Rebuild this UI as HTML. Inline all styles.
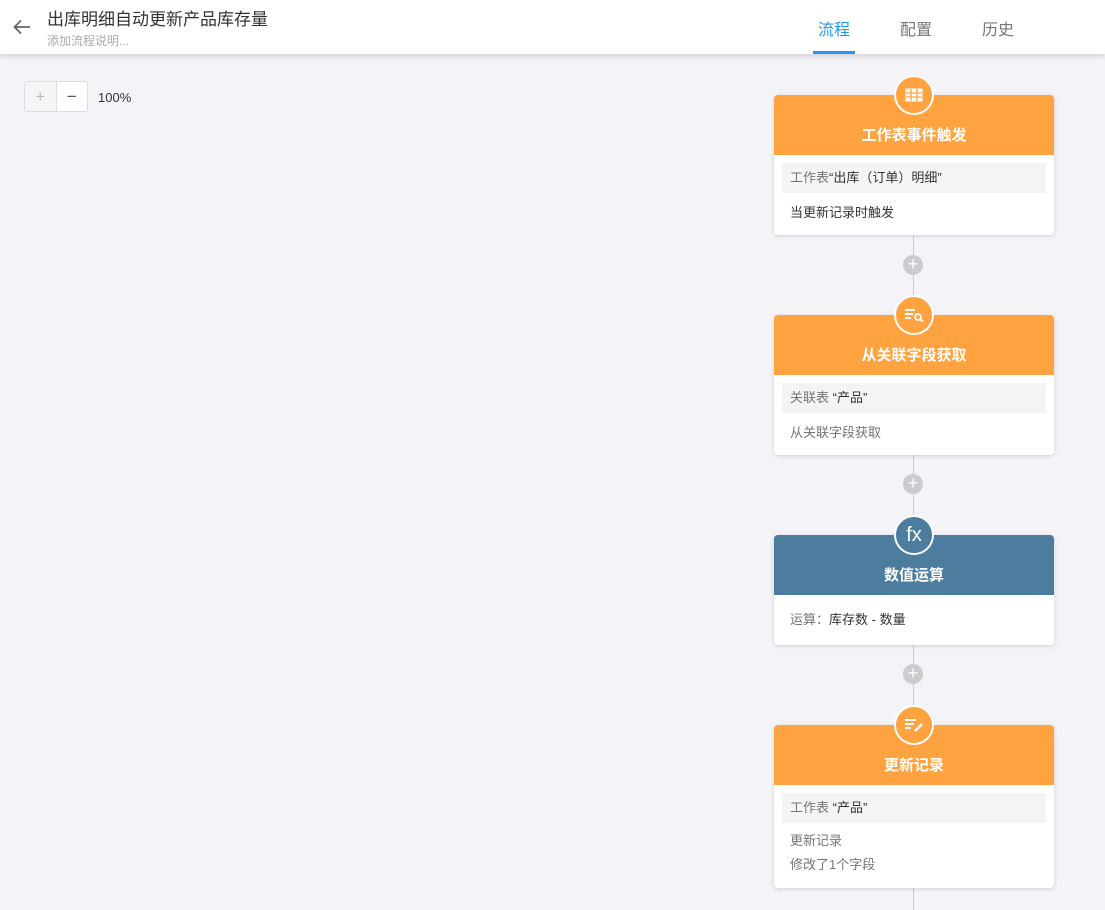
<!DOCTYPE html>
<html><head><meta charset="utf-8"><style>
*{margin:0;padding:0;box-sizing:border-box}
body{width:1105px;height:904px;background:#f3f3f8;font-family:"Liberation Sans","Noto Sans CJK SC",sans-serif;position:relative;overflow:hidden}
.hdr{position:absolute;left:0;top:0;width:1105px;height:54px;background:#fff;box-shadow:0 2px 5px rgba(0,0,0,.15);z-index:2}
.title{position:absolute;left:47px;top:5px;font-size:17px;color:#333}
.sub{position:absolute;left:47px;top:32px;font-size:12px;color:#aaa}
.tab{position:absolute;top:16px;font-size:16px;color:#757575}
.line{position:absolute;left:913px;top:230px;width:1px;height:680px;background:#ccc}
.plus{position:absolute;left:903px;width:20px;height:20px;border-radius:50%;background:#ccc;color:#fff;font-size:18px;line-height:19px;text-align:center}
.card{position:absolute;left:774px;width:280px;background:#fff;border-radius:4px;box-shadow:0 1px 4px rgba(0,0,0,.15)}
.ch{height:60px;border-radius:4px 4px 0 0;color:#fff;font-weight:bold;font-size:15px;text-align:center;padding-top:31px;line-height:20px}
.ic{position:absolute;left:120px;top:-20px;width:40px;height:40px;border-radius:50%;border:2px solid #fff;display:flex;align-items:center;justify-content:center;color:#fff}
.gb{margin:8px 8px 0;background:#f4f4f4;height:30px;line-height:30px;padding-left:8px;font-size:13px;color:#757575}
.t{padding-left:16px;font-size:13px;color:#333;line-height:24px}
.o{background:#ffa340}.b{background:#4c7d9e}
</style></head><body>
<div class="hdr">
<svg style="position:absolute;left:13px;top:19px" width="18" height="16" viewBox="0 0 18 16"><path d="M17 8H2M8 1.5L1.5 8 8 14.5" stroke="#666" stroke-width="1.8" fill="none"/></svg>
<div class="title">出库明细自动更新产品库存量</div>
<div class="sub">添加流程说明...</div>
<div class="tab" style="left:818px;color:#2196f3">流程</div>
<div style="position:absolute;left:813px;top:51px;width:42px;height:3px;background:#2196f3"></div>
<div class="tab" style="left:900px">配置</div>
<div class="tab" style="left:982px">历史</div>
</div>
<div style="position:absolute;left:24px;top:81px;width:64px;height:31px;border:1px solid #ddd;border-radius:3px;background:#fff;display:flex">
<div style="width:32px;border-right:1px solid #ddd;background:#f5f5f5;color:#bbb;text-align:center;line-height:29px;font-size:17px">+</div>
<div style="width:31px;color:#555;text-align:center;line-height:29px;font-size:17px">−</div></div>
<div style="position:absolute;left:98px;top:90px;font-size:13px;color:#333">100%</div>
<div class="line"></div>
<div class="plus" style="top:255px">+</div>
<div class="plus" style="top:474px">+</div>
<div class="plus" style="top:664px">+</div>

<div class="card" style="top:95px;height:140px"><div class="ch o">工作表事件触发</div>
<div class="ic o"><svg width="18" height="14" viewBox="0 0 18 14"><rect x="0.5" y="0.5" width="17" height="13" rx="1" fill="#fff"/><path d="M1 5h16M1 9h16M6 1v12M12 1v12" stroke="#ffa340" stroke-width="1.3"/></svg></div>
<div class="gb">工作表<span style="color:#333">“出库（订单）明细”</span></div>
<div class="t" style="margin-top:8px">当更新记录时触发</div></div>

<div class="card" style="top:315px;height:140px"><div class="ch o">从关联字段获取</div>
<div class="ic o"><svg width="20" height="14" viewBox="0 0 20 14"><path d="M1 2h10M1 6h8M1 10h6" stroke="#fff" stroke-width="2"/><circle cx="14" cy="9" r="3" stroke="#fff" stroke-width="1.8" fill="none"/><path d="M16 11l3 3" stroke="#fff" stroke-width="2"/></svg></div>
<div class="gb">关联表 <span style="color:#333">“产品”</span></div>
<div class="t" style="margin-top:8px;color:#757575">从关联字段获取</div></div>

<div class="card" style="top:535px;height:110px"><div class="ch b">数值运算</div>
<div class="ic b" style="font-size:20px">fx</div>
<div class="t" style="margin-top:13px"><span style="color:#757575">运算：</span>库存数 - 数量</div></div>

<div class="card" style="top:725px;height:163px"><div class="ch o">更新记录</div>
<div class="ic o"><svg width="20" height="14" viewBox="0 0 20 14"><path d="M1 2h11M1 6h9M1 10h6" stroke="#fff" stroke-width="2"/><path d="M11 13l7-7" stroke="#fff" stroke-width="2.4"/></svg></div>
<div class="gb">工作表 <span style="color:#333">“产品”</span></div>
<div class="t" style="margin-top:6px;color:#757575">更新记录</div>
<div class="t" style="color:#757575">修改了1个字段</div></div>
</body></html>
